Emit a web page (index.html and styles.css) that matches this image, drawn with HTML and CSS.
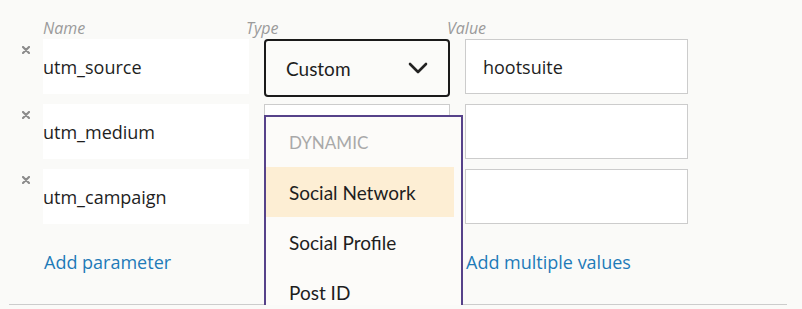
FILE: index.html
```html
<!DOCTYPE html>
<html lang="en">
<head>
    <meta charset="UTF-8">
    <meta name="viewport" content="width=device-width, initial-scale=1.0">
    <title>URL Parameters</title>
    <link rel="stylesheet" href="styles.css">
</head>
<body>
    <div class="params">
        <div class="grid labels">
            <span></span>
            <span class="label">Name</span>
            <span class="label shift">Type</span>
            <span class="label shift">Value</span>
        </div>

        <div class="grid row">
            <button class="remove" title="Remove">
                <svg width="8" height="8" viewBox="0 0 8 8"><path d="M1 1L7 7M7 1L1 7" stroke="#8c8c8c" stroke-width="2.2" stroke-linecap="round"/></svg>
            </button>
            <div class="field name">utm_source</div>
            <div class="select active">
                <span>Custom</span>
                <svg width="20" height="12" viewBox="0 0 20 12"><path d="M2 2L10 10L18 2" fill="none" stroke="#222" stroke-width="2.6" stroke-linecap="round" stroke-linejoin="round"/></svg>
            </div>
            <div class="field value">hootsuite</div>
        </div>

        <div class="grid row">
            <button class="remove" title="Remove">
                <svg width="8" height="8" viewBox="0 0 8 8"><path d="M1 1L7 7M7 1L1 7" stroke="#8c8c8c" stroke-width="2.2" stroke-linecap="round"/></svg>
            </button>
            <div class="field name">utm_medium</div>
            <div class="select">
                <ul class="menu">
                    <li class="heading">Dynamic</li>
                    <li class="hover">Social Network</li>
                    <li>Social Profile</li>
                    <li>Post ID</li>
                </ul>
            </div>
            <div class="field value"></div>
        </div>

        <div class="grid row">
            <button class="remove" title="Remove">
                <svg width="8" height="8" viewBox="0 0 8 8"><path d="M1 1L7 7M7 1L1 7" stroke="#8c8c8c" stroke-width="2.2" stroke-linecap="round"/></svg>
            </button>
            <div class="field name">utm_campaign</div>
            <div class="select"></div>
            <div class="field value"></div>
        </div>

        <div class="grid actions">
            <span></span>
            <a href="#" class="link">Add parameter</a>
            <span></span>
            <a href="#" class="link">Add multiple values</a>
        </div>
    </div>
    <hr class="divider">
</body>
</html>
```

FILE: styles.css
```css
body {
    margin: 0;
    background: #fafaf8;
    font-family: "Open Sans", sans-serif;
    color: #1e1e1e;
    overflow: hidden;
}
.params {
    padding-top: 18px;
}
.grid {
    display: grid;
    grid-template-columns: 28px 206px 186px 223px;
    column-gap: 15px;
}
.labels {
    height: 21px;
}
.label {
    font-size: 16px;
    line-height: 20px;
    font-style: italic;
    color: #9b9b9b;
}
.label.shift {
    margin-left: -18px;
}
.row {
    height: 55px;
    margin-bottom: 10px;
}
.remove {
    border: 0;
    background: none;
    padding: 0;
    margin: 7px 0 0 22px;
    width: 8px;
    height: 8px;
    line-height: 0;
    cursor: pointer;
}
.field {
    box-sizing: border-box;
    height: 55px;
    background: #fff;
    font-size: 18px;
    display: flex;
    align-items: center;
}
.field.value {
    border: 1px solid #cccccc;
    padding-left: 17px;
}
.select {
    position: relative;
    box-sizing: border-box;
    height: 55px;
    border: 1px solid #cccccc;
    background: #fff;
}
.select.active {
    height: 58px;
    margin-bottom: -3px;
    border: 2px solid #1a1a1a;
    border-radius: 4px;
    display: flex;
    align-items: center;
    justify-content: space-between;
    padding: 0 20px 0 20px;
    font-family: Lato, sans-serif;
    font-size: 19px;
    background: #fbfbf9;
}
.menu {
    position: absolute;
    top: 10px;
    left: -1px;
    width: 199px;
    height: 194px;
    box-sizing: border-box;
    margin: 0;
    padding: 0 7px 0 0;
    list-style: none;
    border: 2px solid #56428a;
    border-bottom: 0;
    overflow: hidden;
    background: #fcfbf9;
    font-family: Lato, sans-serif;
    font-size: 19px;
    z-index: 2;
}
.menu li {
    height: 50px;
    line-height: 51px;
    padding-left: 23px;
}
.menu .heading {
    text-transform: uppercase;
    color: #a9a9a9;
    font-size: 17px;
}
.menu .hover {
    background: #fdeed4;
}
.actions {
    margin-top: 26px;
    height: 24px;
}
.link {
    font-size: 18px;
    line-height: 24px;
    font-weight: 500;
    color: #1e7bb8;
    text-decoration: none;
    margin-left: 1px;
}
.divider {
    margin: 30px 15px 0 9px;
    border: 0;
    border-top: 1px solid #cccccc;
}
```
